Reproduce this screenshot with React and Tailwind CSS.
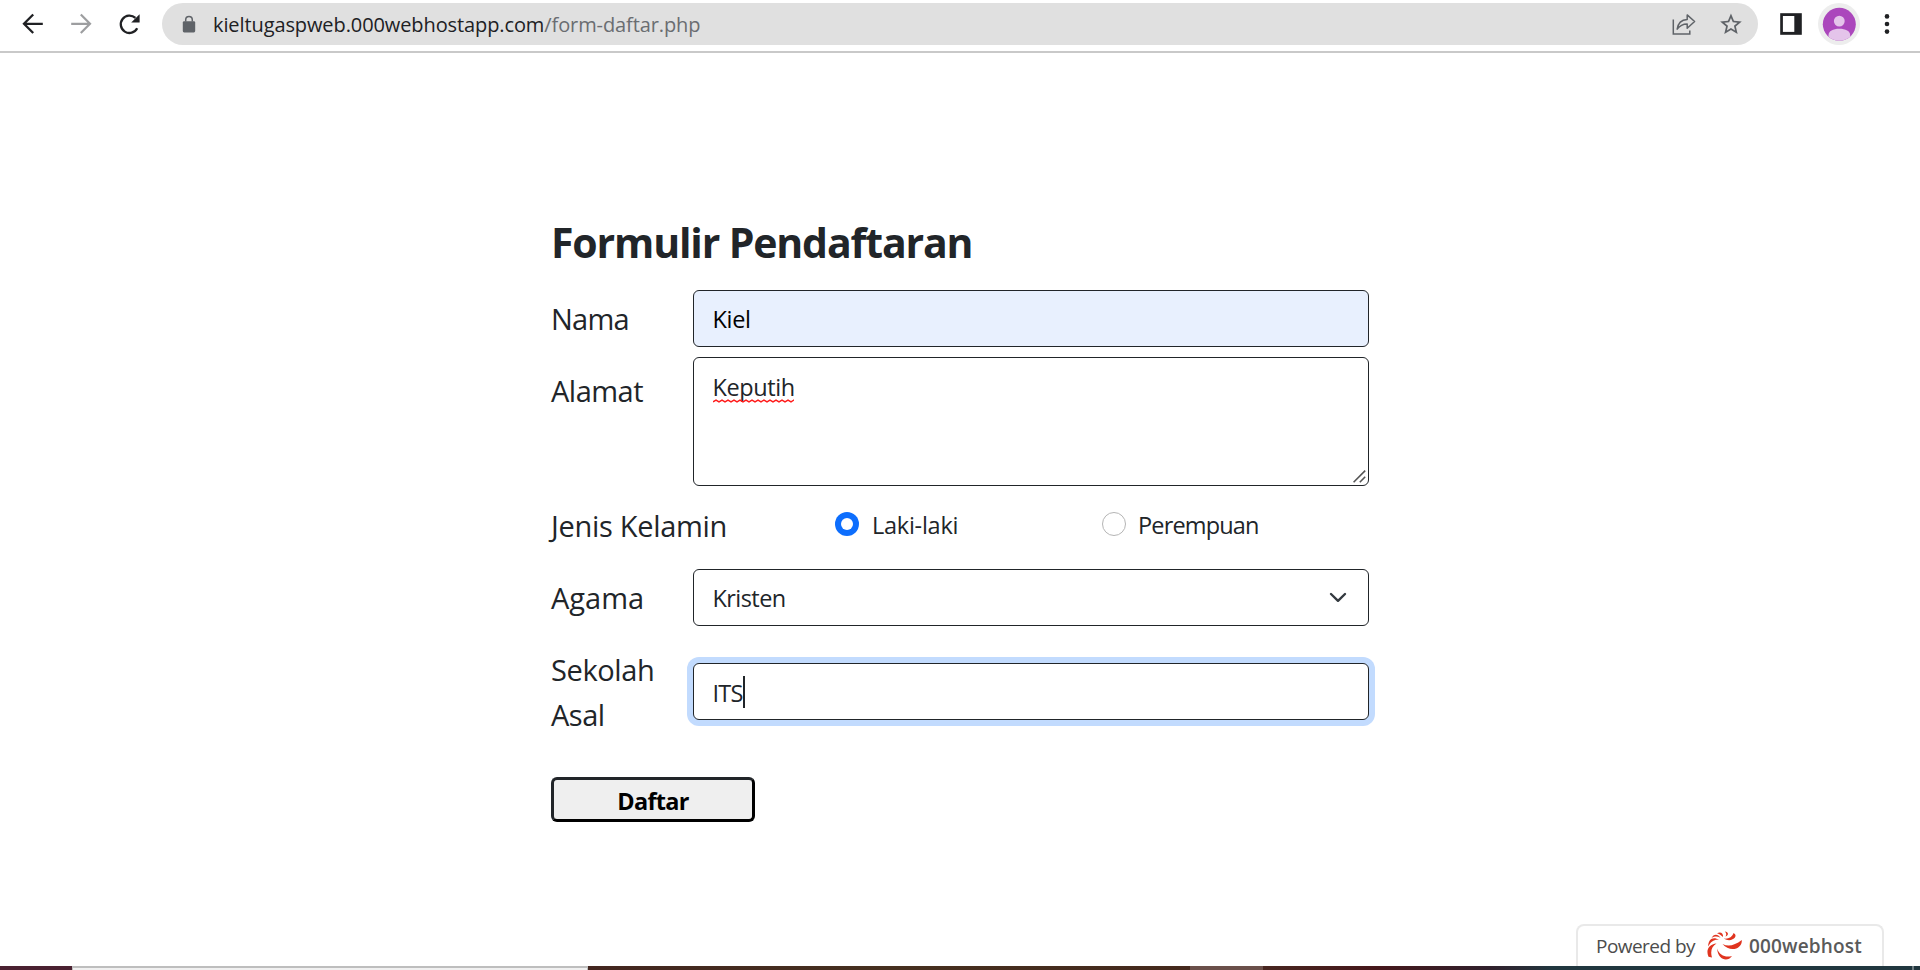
const field =
  "block w-[676px] rounded-[6px] border border-[#212529] pl-[18.5px] text-[23.5px] outline-none";

function Label({ children, className = "" }) {
  return (
    <label className={`w-[142px] shrink-0 whitespace-nowrap text-[29px] leading-[45px] ${className}`}>
      {children}
    </label>
  );
}

function Toolbar() {
  return (
    <header className="flex h-[53px] shrink-0 items-start border-b-2 border-[#c9c9c9] bg-white pt-[3px]">
      <div className="flex h-[42px] w-[162px] items-center">
        <svg className="ml-[18px]" width="30" height="42" viewBox="0 0 30 42" fill="none" stroke="#202124" strokeWidth="2.3">
          <path d="M24.8 20.8H7M15.2 11.5L6 20.8L15.2 30" />
        </svg>
        <svg className="ml-[18px]" width="30" height="42" viewBox="0 0 30 42" fill="none" stroke="#9d9ea0" strokeWidth="2.2">
          <path d="M5.2 20.8H23M14.8 11.5L24 20.8L14.8 30" />
        </svg>
        <svg className="ml-[18px]" width="30" height="42" viewBox="0 0 30 42" fill="none">
          <path d="M23.2 25.3A8.7 8.7 0 1 1 21.4 14.9" stroke="#202124" strokeWidth="2.3" />
          <path d="M25.6 11.2V19.6H17.2Z" fill="#202124" />
        </svg>
      </div>
      <div className="flex h-[42px] w-[1596px] items-center rounded-full bg-[#e0e0e0]">
        <svg className="ml-[20px]" width="14" height="42" viewBox="0 0 14 42">
          <rect x="0.8" y="18.2" width="12.4" height="11.3" rx="1.4" fill="#5f6368" />
          <path d="M3.7 18.5V16.9a3.3 3.3 0 0 1 6.6 0V18.5" fill="none" stroke="#5f6368" strokeWidth="1.5" />
        </svg>
        <span className="ml-[17px] pt-[2px] whitespace-nowrap text-[20px] leading-[42px] tracking-[-0.1px] text-[#202124]">
          kieltugaspweb.000webhostapp.com<span className="text-[#6a6d71]">/form-daftar.php</span>
        </span>
        <svg className="ml-auto" width="26" height="42" viewBox="0 0 26 42" fill="none" stroke="#5f6368" strokeWidth="1.5">
          <path d="M2.3 16.5V31H18.8V27.4" />
          <path d="M6.2 26.2C7 20.3 10 17 16.2 16.6V11.9L23.6 18.5L16.2 25.2V20.9C11.8 20.9 8.8 22.4 6.2 26.2Z" strokeLinejoin="round" />
        </svg>
        <svg className="mr-[15px] ml-[22px]" width="24" height="42" viewBox="0 0 24 42">
          <path
            transform="translate(-1 8.4) scale(1.08)"
            fill="#5f6368"
            d="M22 9.24l-7.19-.62L12 2 9.19 8.63 2 9.24l5.46 4.73L5.82 21 12 17.27 18.18 21l-1.63-7.03L22 9.24zM12 15.4l-3.76 2.27 1-4.28-3.32-2.88 4.38-.38L12 6.1l1.71 4.04 4.38.38-3.32 2.88 1 4.28L12 15.4z"
          />
        </svg>
      </div>
      <svg className="ml-[22px]" width="22" height="42" viewBox="0 0 22 42">
        <rect x="0.2" y="10.2" width="21.6" height="21.6" fill="#202124" />
        <rect x="2.9" y="13" width="11.4" height="15.9" fill="#fff" />
      </svg>
      <svg className="ml-[16px]" width="42" height="42" viewBox="0 0 42 42">
        <defs>
          <clipPath id="face">
            <circle cx="21.3" cy="21.3" r="16.5" />
          </clipPath>
        </defs>
        <circle cx="21" cy="21" r="21" fill="#ededed" />
        <circle cx="21.3" cy="21.3" r="16.5" fill="#ab47bc" />
        <g clipPath="url(#face)" fill="#e4c4ea">
          <circle cx="21.3" cy="18.1" r="5.4" />
          <path d="M10.5 40V32.5C10.5 28 15 25.8 21.3 25.8S32.2 28 32.2 32.5V40Z" />
        </g>
      </svg>
      <svg className="ml-[22px]" width="10" height="42" viewBox="0 0 10 42" fill="#202124">
        <circle cx="5" cy="13.4" r="2.3" />
        <circle cx="5" cy="21" r="2.3" />
        <circle cx="5" cy="28.6" r="2.3" />
      </svg>
    </header>
  );
}

function Squiggle() {
  const d = "M0 2.8" + Array.from({ length: 14 }, (_, i) => `L${i * 6 + 3} 1L${i * 6 + 6} 2.8`).join("");
  return (
    <svg className="absolute top-[42px] left-[20px]" width="81" height="4" viewBox="0 0 81 4" fill="none">
      <path d={d} stroke="#ff1a1a" strokeWidth="1.5" />
    </svg>
  );
}

function Form() {
  return (
    <form className="ml-[551px] flex w-[818px] flex-col pt-[165px] text-[#212529]">
      <h1 className="h-[72px] whitespace-nowrap text-[41px] leading-[48px] font-bold tracking-[-1.15px]">
        Formulir Pendaftaran
      </h1>
      <div className="flex h-[67px] items-start">
        <Label className="pt-[6px] tracking-[-0.75px]">Nama</Label>
        <input className={`${field} h-[57px] bg-[#e8f0fe] pt-[1px] tracking-[-0.3px] text-black`} defaultValue="Kiel" />
      </div>
      <div className="flex h-[146px] items-start">
        <Label className="pt-[11px] tracking-[-0.5px]">Alamat</Label>
        <div className="relative">
          <textarea
            className={`${field} h-[129px] resize-none bg-white pt-[11px] leading-[36px] tracking-[-0.4px]`}
            spellCheck={false}
            defaultValue="Keputih"
          />
          <Squiggle />
          <svg className="absolute right-[3px] bottom-[3px]" width="13" height="13" viewBox="0 0 13 13" stroke="#555" strokeWidth="1.6">
            <path d="M0.6 12.2L12.2 0.6M6.8 12.2L12.2 6.8" />
          </svg>
        </div>
      </div>
      <div className="flex h-[66px] items-start whitespace-nowrap">
        <span className="w-[284px] text-[29px] leading-[45px] tracking-[-0.3px]">
          Jenis Kelamin
        </span>
        <span className="mt-[9px] flex h-[24px] w-[24px] items-center justify-center rounded-full bg-[#0d6efd]">
          <span className="h-[12px] w-[12px] rounded-full bg-white" />
        </span>
        <span className="ml-[13px] w-[230px] pt-[4px] text-[23.5px] leading-[36px] tracking-[-0.25px]">Laki-laki</span>
        <span className="mt-[9px] h-[24px] w-[24px] rounded-full border border-[#b5b5b5] bg-white" />
        <span className="ml-[12px] pt-[4px] text-[23.5px] leading-[36px] tracking-[-0.85px]">Perempuan</span>
      </div>
      <div className="flex h-[78px] items-start">
        <Label className="pt-[6px]">Agama</Label>
        <div className="relative">
          <select className={`${field} h-[57px] appearance-none bg-white pt-[2px] tracking-[-0.57px]`} defaultValue="Kristen">
            <option>Kristen</option>
          </select>
          <svg className="absolute top-[22px] right-[22px]" width="18" height="13" viewBox="0 0 18 13" fill="none" stroke="#343a40" strokeWidth="2.4" strokeLinecap="round" strokeLinejoin="round">
            <path d="M2 3L9 9.8L16 3" />
          </svg>
        </div>
      </div>
      <div className="flex h-[130px] items-start">
        <Label>
          <span className="block tracking-[-0.4px]">Sekolah</span>
          <span className="block tracking-[-0.5px]">Asal</span>
        </Label>
        <div className="relative mt-[16px]">
          <input
            className={`${field} h-[57px] bg-white pt-[2px] tracking-[-0.75px] shadow-[0_0_0_6px_#c2dbfe]`}
            defaultValue="ITS"
          />
          <span className="absolute top-[13px] left-[50px] h-[32px] w-[2px] bg-[#212529]" />
        </div>
      </div>
      <button
        type="button"
        className="h-[45px] w-[204px] rounded-[6px] border-[3px] border-t-[#212529] border-r-black border-b-black border-l-[#212529] bg-[#efefef] pt-[3px] text-[23.5px] leading-[36px] font-bold tracking-[-0.7px] text-black"
      >
        Daftar
      </button>
    </form>
  );
}

function PoweredBy() {
  return (
    <div className="mr-[36px] flex h-[42px] w-[308px] items-center self-end rounded-t-[8px] border-2 border-b-0 border-[#e9e9e9] bg-white pl-[18px] whitespace-nowrap text-[#4c4c4c]">
      <span className="w-[99px] text-[19px] leading-[42px] font-medium tracking-[-0.54px]">Powered by</span>
      <svg className="ml-[12px]" width="36" height="30" viewBox="0 0 36 30" fill="#e0341f">
        <path d="M10 17.5C12.5 24.5 18.5 26.8 25 25C20.5 31.5 11 29 10 17.5Z" />
        <path d="M15.5 13C21.5 16 27.5 14.5 34.8 9C35.5 18 23 22 15.5 13Z" />
        <path d="M17 7.5C21 8.3 25.5 6 26.5 2C32.5 5 24 12.5 17 7.5Z" />
        <path d="M9.5 12.5C5 15 3 20 5 26.5L1.5 25.8C-1.5 19 2 13.2 9.5 12.5Z" />
        <path d="M12 8.8C7.5 8 4 10 1.2 15.5C1 8.5 6 4.8 12 8.8Z" />
        <path d="M13.5 6.8C10.5 5.3 8 5 4.5 7C6.5 2.6 11 2.5 13.5 6.8Z" />
        <path d="M16 6C14.3 4.8 13 3 10 2.2C13.5 .3 16.6 2.2 16 6Z" />
        <path d="M18.5 5.5C19.6 4 19.6 2.3 17.8 .5C21.8 1 22 4.4 18.5 5.5Z" />
      </svg>
      <span className="ml-[6px] text-[19px] leading-[42px] font-semibold tracking-[0.15px] text-[#5a5a5a]">000webhost</span>
    </div>
  );
}

function Taskbar() {
  return (
    <div className="flex h-[4px] shrink-0">
      <div className="w-[72px] bg-[#4a2131]" />
      <div className="w-[516px] border-x border-t-2 border-[#bebebe] bg-[#f1f1f1]" />
      <div className="w-[602px] bg-linear-to-r from-[#43261f] via-[#46301f] to-[#45291d]" />
      <div className="w-[73px] bg-[#6b504a]" />
      <div className="w-[227px] bg-linear-to-r from-[#482620] via-[#46171b] to-[#30202c]" />
      <div className="w-[60px] bg-linear-to-r from-[#30202c] to-[#21353e]" />
      <div className="w-[362px] bg-[#21373f]" />
      <div className="w-[2px] bg-[#6f7d82]" />
      <div className="w-[6px] bg-[#21373f]" />
    </div>
  );
}

export default function App() {
  return (
    <div className="flex h-[970px] w-[1920px] flex-col overflow-hidden bg-white font-['Open_Sans',sans-serif]">
      <Toolbar />
      <main className="flex grow flex-col justify-between">
        <Form />
        <PoweredBy />
      </main>
      <Taskbar />
    </div>
  );
}
